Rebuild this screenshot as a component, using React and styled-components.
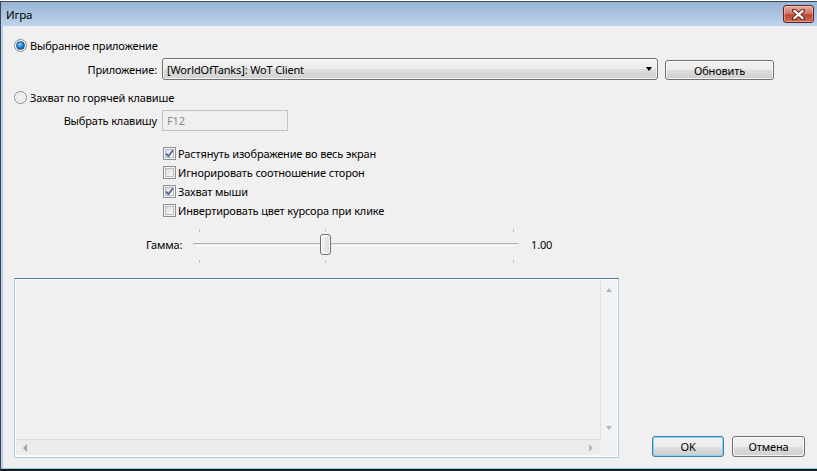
import React from 'react';
import styled, { createGlobalStyle } from 'styled-components';

const Global = createGlobalStyle`
  html, body { margin: 0; padding: 0; background: #ffffff; }
  body {
    font-family: "Noto Sans", "Liberation Sans", sans-serif;
    font-size: 12px;
    color: #000;
    overflow: hidden;
  }
  * { box-sizing: border-box; }
`;

const Window = styled.div`
  margin-top: 1px;
  width: 817px;
  height: 470px;
  border-top: 1px solid #3b4658;
  border-left: 1px solid #3b4658;
  border-bottom: 2px solid #1c1c1c;
  display: flex;
  flex-direction: column;
`;

const TitleBar = styled.div`
  height: 24px;
  flex: none;
  display: flex;
  align-items: center;
  justify-content: space-between;
  padding: 0 3px 0 5px;
  background: linear-gradient(#97b3d5, #bed4ec);
`;

const Title = styled.span`
  font-size: 11.5px;
  color: #000;
  letter-spacing: -0.2px;
`;

const CloseButton = styled.div`
  width: 31px;
  height: 18px;
  border: 1px solid #5b2222;
  border-radius: 3px;
  background: linear-gradient(#e8a89c 0%, #d5796b 45%, #c0442f 55%, #cf6b54 100%);
  box-shadow: inset 0 0 0 1px rgba(255, 255, 255, 0.35);
  display: flex;
  align-items: center;
  justify-content: center;
`;

const Client = styled.div`
  flex: 1;
  background: #f0f0f0;
  border-left: 2px solid #b6cfe9;
  border-bottom: 1px solid #86c8ee;
  display: flex;
  flex-direction: column;
  font-size: 11px;
  letter-spacing: -0.15px;
`;

const RadioRow = styled.div`
  display: flex;
  align-items: center;
  height: 16px;
  gap: 3px;
  margin: ${(p) => p.$mt}px 0 0 11px;
`;

const Radio = styled.span`
  width: 13px;
  height: 13px;
  border-radius: 50%;
  border: 1px solid #8b8d90;
  background: radial-gradient(circle at 50% 50%, #f7f7f7 0%, #e4e4e4 60%, #cfcfcf 100%);
  box-shadow: inset 0 0 0 1px #ffffff;
  display: flex;
  align-items: center;
  justify-content: center;
  &::after {
    content: '';
    width: 7px;
    height: 7px;
    border-radius: 50%;
    display: ${(p) => (p.$checked ? 'block' : 'none')};
    background: radial-gradient(circle at 40% 35%, #8fd4ff 0%, #1f8ce0 45%, #0b4a8e 100%);
    border: 1px solid #1b4e85;
  }
`;

const FieldRow = styled.div`
  display: flex;
  align-items: center;
  margin-top: ${(p) => p.$mt}px;
`;

const FieldLabel = styled.span`
  width: 154px;
  text-align: right;
  margin-right: 5px;
  flex: none;
`;

const Select = styled.div`
  width: 496px;
  height: 22px;
  border: 1px solid #707070;
  border-radius: 3px;
  background: linear-gradient(#f3f3f3 0%, #ebebeb 50%, #dddddd 51%, #d2d2d2 100%);
  box-shadow: inset 0 0 0 1px rgba(255, 255, 255, 0.7);
  display: flex;
  align-items: center;
  justify-content: space-between;
  padding: 0 5px 0 4px;
`;

const SelectText = styled.span`
  color: #000;
`;

const Arrow = styled.span`
  width: 0;
  height: 0;
  border-left: 3.5px solid transparent;
  border-right: 3.5px solid transparent;
  border-top: 4px solid #000;
`;

const Button = styled.div`
  width: ${(p) => p.$w}px;
  height: ${(p) => p.$h || 21}px;
  margin-left: ${(p) => p.$ml || 0}px;
  align-self: flex-end;
  border: 1px solid ${(p) => (p.$default ? '#3c7fb1' : '#707070')};
  border-radius: 3px;
  background: linear-gradient(#f2f2f2 0%, #ebebeb 50%, #dddddd 51%, #cfcfcf 100%);
  box-shadow: inset 0 0 0 1px ${(p) => (p.$default ? '#7fd6f7' : 'rgba(255,255,255,0.75)')};
  display: flex;
  align-items: center;
  justify-content: center;
  color: #000;
`;

const TextInput = styled.div`
  width: 126px;
  height: 21px;
  border: 1px solid #c3c3c3;
  background: #f0f0f0;
  color: #8a8a8a;
  display: flex;
  align-items: center;
  padding-left: 4px;
`;

const CheckList = styled.div`
  margin: 13px 0 0 160px;
  display: flex;
  flex-direction: column;
`;

const CheckRow = styled.div`
  height: 19px;
  display: flex;
  align-items: center;
  gap: 2px;
`;

const CheckBox = styled.span`
  width: 13px;
  height: 13px;
  flex: none;
  border: 1px solid #8e8f8f;
  background: linear-gradient(135deg, #cfd3d8 0%, #eef0f2 60%, #fbfbfb 100%);
  box-shadow: inset 0 0 0 1px #f4f4f4, inset 0 0 0 2px #b9bdc2;
  display: flex;
  align-items: center;
  justify-content: center;
`;

const GammaRow = styled.div`
  margin: 4px 0 0 143px;
  height: 41px;
  display: flex;
  align-items: center;
`;

const GammaLabel = styled.span`
  width: 45px;
  flex: none;
`;

const Slider = styled.div`
  position: relative;
  width: 330px;
  height: 41px;
  flex: none;
`;

const Track = styled.div`
  position: absolute;
  left: 2px;
  right: 2px;
  top: 19px;
  height: 3px;
  border-radius: 1px;
  border-top: 1px solid #b4b4b4;
  border-left: 1px solid #c8c8c8;
  border-right: 1px solid #e0e0e0;
  border-bottom: 1px solid #ffffff;
  background: #e7e7e7;
`;

const Tick = styled.span`
  position: absolute;
  width: 1px;
  height: 3px;
  background: #c2c2c2;
`;

const Thumb = styled.div`
  position: absolute;
  top: 10px;
  width: 11px;
  height: 21px;
  border: 1px solid #707070;
  border-radius: 3px;
  background: linear-gradient(90deg, #f4f4f4 0%, #e9e9e9 50%, #d9d9d9 100%);
  box-shadow: inset 0 0 0 1px #ffffff;
`;

const GammaValue = styled.span`
  margin-left: 10px;
`;

const BottomRow = styled.div`
  margin: 13px 0 0 11px;
  display: flex;
  align-items: flex-end;
`;

const TextBox = styled.div`
  width: 605px;
  height: 180px;
  border: 1px solid #a9cdeb;
  border-top-color: #4c79a6;
  box-shadow: inset 0 0 0 1px #ffffff;
  padding: 1px;
  display: grid;
  grid-template-columns: 1fr 17px;
  grid-template-rows: 1fr 17px;
  background: #f0f0f0;
`;

const TextArea = styled.div`
  background: #f0f0f0;
`;

const VScroll = styled.div`
  background: #f3f3f3;
  border-left: 1px solid #e2e2e2;
  display: flex;
  flex-direction: column;
  justify-content: space-between;
  align-items: center;
  padding: 8px 0 9px;
`;

const HScroll = styled.div`
  background: #ececec;
  border-top: 1px solid #dcdcdc;
  border-bottom: 1px solid #f9f9f9;
  display: flex;
  justify-content: space-between;
  align-items: center;
  padding: 0 7px 0 7px;
`;

const Corner = styled.div`
  background: #f0f0f0;
`;

const Tri = styled.span`
  width: 0;
  height: 0;
  ${(p) =>
    p.$dir === 'up'
      ? 'border-left:3.5px solid transparent;border-right:3.5px solid transparent;border-bottom:4px solid #b5b5b5;'
      : p.$dir === 'down'
      ? 'border-left:3.5px solid transparent;border-right:3.5px solid transparent;border-top:4px solid #b5b5b5;'
      : p.$dir === 'left'
      ? 'border-top:4px solid transparent;border-bottom:4px solid transparent;border-right:4px solid #a4a4a4;'
      : 'border-top:4px solid transparent;border-bottom:4px solid transparent;border-left:4px solid #b5b5b5;'}
`;

const ButtonGroup = styled.div`
  display: flex;
  gap: 8px;
  margin: 0 0 1px 33px;
`;

const checks = [
  { label: 'Растянуть изображение во весь экран', checked: true },
  { label: 'Игнорировать соотношение сторон', checked: false },
  { label: 'Захват мыши', checked: true },
  { label: 'Инвертировать цвет курсора при клике', checked: false },
];

const Check = () => (
  <svg width="9" height="9" viewBox="0 0 9 9">
    <path d="M1 4.6 L3.4 7.2 L8 1.3" fill="none" stroke="#4b5f93" strokeWidth="1.7" />
  </svg>
);

const SLIDER_MIN = 0.5;
const SLIDER_MAX = 1.75;
const gamma = 1.0;

export default function App() {
  const span = 314;
  const pos = 8 + ((gamma - SLIDER_MIN) / (SLIDER_MAX - SLIDER_MIN)) * span;
  return (
    <>
      <Global />
      <Window>
        <TitleBar>
          <Title>Игра</Title>
          <CloseButton>
            <svg width="13" height="11" viewBox="0 0 13 11">
              <path
                d="M2 1.5 L11 9.5 M11 1.5 L2 9.5"
                stroke="#5a1f1a"
                strokeWidth="4"
                strokeLinecap="round"
              />
              <path
                d="M2.3 1.8 L10.7 9.2 M10.7 1.8 L2.3 9.2"
                stroke="#ffffff"
                strokeWidth="2.2"
                strokeLinecap="round"
              />
            </svg>
          </CloseButton>
        </TitleBar>
        <Client>
          <RadioRow $mt={11}>
            <Radio $checked />
            <span>Выбранное приложение</span>
          </RadioRow>
          <FieldRow $mt={5}>
            <FieldLabel>Приложение:</FieldLabel>
            <Select>
              <SelectText>[WorldOfTanks]: WoT Client</SelectText>
              <Arrow />
            </Select>
            <Button $w={109} $h={20} $ml={7}>
              Обновить
            </Button>
          </FieldRow>
          <RadioRow $mt={9}>
            <Radio />
            <span>Захват по горячей клавише</span>
          </RadioRow>
          <FieldRow $mt={5}>
            <FieldLabel>Выбрать клавишу</FieldLabel>
            <TextInput>F12</TextInput>
          </FieldRow>
          <CheckList>
            {checks.map((c) => (
              <CheckRow key={c.label}>
                <CheckBox>{c.checked && <Check />}</CheckBox>
                <span>{c.label}</span>
              </CheckRow>
            ))}
          </CheckList>
          <GammaRow>
            <GammaLabel>Гамма:</GammaLabel>
            <Slider>
              <Track />
              <Tick style={{ left: 8, top: 5 }} />
              <Tick style={{ left: Math.round(pos), top: 5 }} />
              <Tick style={{ left: 8 + span, top: 5 }} />
              <Tick style={{ left: 8, top: 36 }} />
              <Tick style={{ left: Math.round(pos), top: 36 }} />
              <Tick style={{ left: 8 + span, top: 36 }} />
              <Thumb style={{ left: Math.round(pos) - 5 }} />
            </Slider>
            <GammaValue>1.00</GammaValue>
          </GammaRow>
          <BottomRow>
            <TextBox>
              <TextArea />
              <VScroll>
                <Tri $dir="up" />
                <Tri $dir="down" />
              </VScroll>
              <HScroll>
                <Tri $dir="left" />
                <Tri $dir="right" />
              </HScroll>
              <Corner />
            </TextBox>
            <ButtonGroup>
              <Button $w={72} $default>
                OK
              </Button>
              <Button $w={73}>Отмена</Button>
            </ButtonGroup>
          </BottomRow>
        </Client>
      </Window>
    </>
  );
}
